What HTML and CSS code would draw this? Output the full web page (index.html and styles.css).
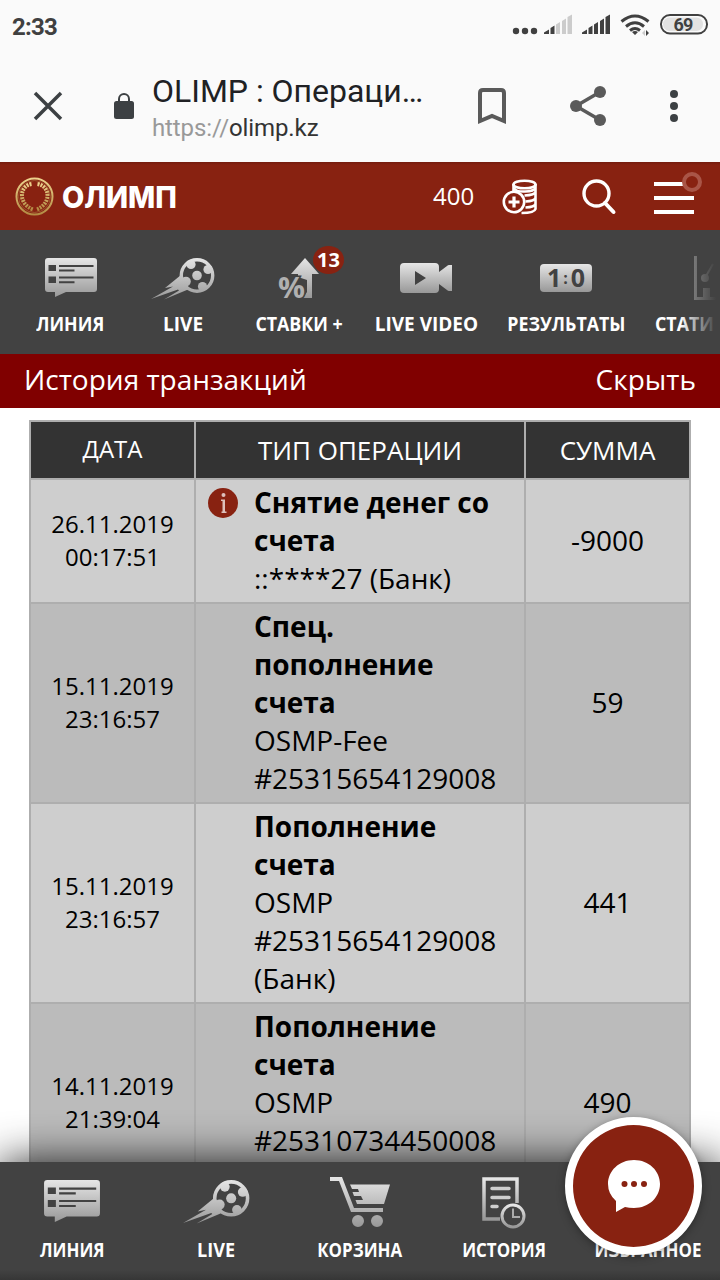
FILE: index.html
```html
<!DOCTYPE html>
<html lang="ru">
  <head>
    <meta charset="utf-8" />
    <meta name="viewport" content="width=device-width, initial-scale=1" />
    <title>OLIMP : Операции</title>
    <link rel="stylesheet" href="styles.css">
  </head>

  <body>
    <!-- shared icon parts -->
    <svg class="defs" width="0" height="0">
      <defs>
        <linearGradient id="silver" x1="0" y1="0" x2="0" y2="1">
          <stop offset="0" stop-color="#e6e6e6" />
          <stop offset="1" stop-color="#989898" />
        </linearGradient>
        <linearGradient id="ball" gradientUnits="userSpaceOnUse" x1="0" y1="0" x2="0" y2="42">
          <stop offset="0" stop-color="#e6e6e6" />
          <stop offset="1" stop-color="#989898" />
        </linearGradient>
        <linearGradient id="gold" x1="0" y1="0" x2="0" y2="1">
          <stop offset="0" stop-color="#ecd28c" />
          <stop offset="1" stop-color="#b38b43" />
        </linearGradient>
        <symbol id="icon-line" viewBox="0 0 52 40">
          <path fill="url(#silver)" d="M3 0h46q3 0 3 3v28q0 3-3 3H21l-11 5v-5H3q-3 0-3-3V3q0-3 3-3z" />
          <path fill="#424242" d="M3.500 7H11v6H3.500zM3.500 18.500H11v6.500H3.500zM14 7h34.500v2H14zM14 11.500h15.500v2H14zM14 18.500h34.500v2H14zM14 23.200h15.500v2H14z" />
        </symbol>
        <symbol id="icon-live" viewBox="0 0 64 42">
          <circle cx="46" cy="17.500" r="15.700" fill="none" stroke="url(#ball)" stroke-width="3.400" />
          <g fill="url(#ball)">
            <circle cx="46" cy="17.500" r="4.800" />
            <circle cx="40" cy="6.500" r="4.600" />
            <circle cx="57" cy="11.500" r="4.600" />
            <circle cx="51.500" cy="28.500" r="4.600" />
            <circle cx="35" cy="23.500" r="4.800" />
            <path d="M30 17L14 30l8-1.500L0 41l27-9.500 1 1L13 41.500l24-10-1-8z" />
          </g>
        </symbol>
      </defs>
    </svg>

    <div class="screen">
      <div class="status-bar">
        <b>2:33</b>
        <svg width="196" height="26" viewBox="0 0 196 26">
          <g fill="#404040">
            <circle cx="4" cy="18" r="3.200" /><circle cx="13" cy="18" r="3.200" /><circle cx="22" cy="18" r="3.200" />
            <path d="M32 21v-1.500l5-3V21zM38.500 21v-6l4-2.500V21zM70 21v-1.500l5-3V21zM76.500 21v-6l4-2.500V21zM82 21v-9.500l4-2.500v12zM88 21V8l4-2.500V21zM93.500 21V4l4.500-2.500V21z" />
          </g>
          <path fill="#cccccc" d="M44 21v-9.500L48 9v12zM50 21V8l4-2.500V21zM55.500 21V4L60 1.500V21z" />
          <g fill="none" stroke="#404040" stroke-width="3">
            <path d="M109.500 8.500q13.500-11 27 0M114 13.500q9-7.500 18 0M118 17.500q5-4 10 0" />
            <rect x="149" y="2" width="46" height="18.500" rx="9" stroke-width="2" />
          </g>
          <path fill="#404040" d="M120 19q3-2 6 0l-3 3zM134 17l3 3-3 3z" />
          <path fill="#cccccc" d="M133 17l-3 3 3 3z" />
          <rect x="151" y="4.500" width="40" height="13.500" rx="6.500" fill="#e2e2e2" />
          <text x="171" y="18" text-anchor="middle" class="battery">69</text>
        </svg>
      </div>

      <div class="browser-bar">
        <svg class="close" width="28" height="28" viewBox="0 0 28 28"><path d="M1 1l26 26M27 1L1 27" stroke="#3c4043" stroke-width="3.500" /></svg>
        <svg class="lock" width="20" height="26" viewBox="0 0 20 26"><rect y="8" width="20" height="18" rx="2.500" fill="#3c4043" /><path d="M5 9V6a5 5 0 0 1 10 0v3" fill="none" stroke="#3c4043" stroke-width="2" /></svg>
        <div class="address">
          <div class="page-title">OLIMP : Операци…</div>
          <div class="url"><span>https://</span>olimp.kz</div>
        </div>
        <svg class="bookmark" width="28" height="36" viewBox="0 0 28 36"><path d="M2 33V5q0-3 3-3h18q3 0 3 3v28l-12-5z" fill="none" stroke="#5a5a5a" stroke-width="4" /></svg>
        <svg class="share" width="36" height="40" viewBox="0 0 36 40"><g fill="#5a5a5a"><circle cx="30" cy="6" r="6" /><circle cx="6" cy="20" r="6" /><circle cx="30" cy="34" r="6" /></g><path d="M30 6L6 20l24 14" fill="none" stroke="#5a5a5a" stroke-width="3.500" /></svg>
        <svg class="dots" width="8" height="32" viewBox="0 0 8 32"><g fill="#3c4043"><circle cx="4" cy="4" r="4" /><circle cx="4" cy="16" r="4" /><circle cx="4" cy="28" r="4" /></g></svg>
      </div>

      <div class="header">
        <svg class="laurel" width="39" height="39" viewBox="0 0 39 39">
          <circle cx="19.500" cy="19.500" r="18" fill="none" stroke="url(#gold)" stroke-width="2" />
          <circle cx="19.500" cy="19.500" r="16" fill="none" stroke="#a46838" stroke-width=".7" />
          <path d="M16.500 7C4 9 3 27 18 32.500M22.500 7c13 2 14 20-1 25.500" fill="none" stroke="url(#gold)" stroke-width="4" stroke-dasharray="2 1" />
        </svg>
        <svg class="wordmark" width="116" height="40"><text x="0" y="32" textLength="115" lengthAdjust="spacingAndGlyphs">ОЛИМП</text></svg>
        <span class="balance">400</span>
        <svg class="coins" width="36" height="36" viewBox="0 0 36 36">
          <g fill="none" stroke="#fff" stroke-width="2.600">
            <ellipse cx="22.500" cy="5.500" rx="11" ry="3.800" />
            <path d="M11.500 5v7M33.500 5v25q-1 4-14 4M33.500 13q-1 3-11 3.500M33.500 19q-1 3-10 3.500M33.500 25q-1 3-10 3.500M12 9q2 4 11 3.500 9 0 10.500-4" />
            <circle cx="12" cy="23" r="10.200" />
            <path d="M12 17.500v11M6.500 23h11" stroke-width="3.200" />
          </g>
        </svg>
        <svg class="search" width="34" height="36" viewBox="0 0 34 36"><circle cx="14.500" cy="14.500" r="12.500" fill="none" stroke="#fff" stroke-width="3.400" /><path d="M23 24l8.500 9" stroke="#fff" stroke-width="4" stroke-linecap="round" /></svg>
        <svg class="burger" width="50" height="44" viewBox="0 0 50 44"><path d="M0 12h30M0 26h40M0 40h40" stroke="#fff" stroke-width="4" /><circle cx="38" cy="10" r="8" fill="#882211" stroke="#a95547" stroke-width="4" /></svg>
      </div>

      <div class="top-nav">
        <div class="nav-item line">
          <svg width="52" height="40"><use href="#icon-line" /></svg>
          <span>ЛИНИЯ</span>
        </div>
        <div class="nav-item live">
          <svg width="64" height="42"><use href="#icon-live" /></svg>
          <span class="latin">LIVE</span>
        </div>
        <div class="nav-item stakes">
          <svg width="42" height="42" viewBox="0 0 42 42">
            <path fill="url(#silver)" d="M27 0l14 16h-7v24h-9l4-6V22l-9-3v-3h-7z" />
            <text x="0" y="39.500" textLength="27" lengthAdjust="spacingAndGlyphs" class="percent">%</text>
          </svg>
          <span>СТАВКИ +</span>
          <em class="badge">13</em>
        </div>
        <div class="nav-item video">
          <svg width="52" height="30" viewBox="0 0 52 30"><path fill="url(#silver)" fill-rule="evenodd" d="M4 0h31q4 0 4 4v5l8-6q1-1 2-1h3v26h-3q-1 0-2-1l-8-6v5q0 4-4 4H4q-4 0-4-4V4q0-4 4-4zM15 8v14l11-7z" /></svg>
          <span class="latin">LIVE VIDEO</span>
        </div>
        <div class="nav-item results">
          <svg width="52" height="28" viewBox="0 0 52 28"><rect width="52" height="28" rx="4" fill="url(#silver)" /><text x="26" y="23" text-anchor="middle" class="score">1<tspan class="colon" dy="-3" dx="2">:</tspan><tspan dy="3" dx="3">0</tspan></text></svg>
          <span>РЕЗУЛЬТАТЫ</span>
        </div>
        <div class="nav-item stats">
          <svg width="52" height="44" viewBox="0 0 52 44"><g fill="#9a9a9a"><path d="M0 0h3v41h49v3H0zM9 32h7v9H9z" /><circle cx="11" cy="22" r="4" /></g><path d="M11 22l8-14" stroke="#9a9a9a" stroke-width="2" /></svg>
          <span>СТАТИ</span>
        </div>
        <div class="fade"></div>
      </div>

      <div class="section-title"><span>История транзакций</span><span>Скрыть</span></div>

      <table class="history">
        <tr><th class="date">ДАТА</th><th class="type">ТИП ОПЕРАЦИИ</th><th class="sum">СУММА</th></tr>
        <tr>
          <td class="date">26.11.2019<br />00:17:51</td>
          <td class="type">
            <div class="operation">
              <svg class="info" width="30" height="30" viewBox="0 0 30 30"><circle cx="15" cy="15" r="15" fill="#882211" /><path d="M13 11.500h4v12h1.500V25h-5v-1.500H14.500V13H13z" fill="#ddc0bb" /><circle cx="15.500" cy="7" r="2" fill="#ddc0bb" /></svg>
              <div><b>Снятие денег со счета</b><br />::****27 (Банк)</div>
            </div>
          </td>
          <td class="sum">-9000</td>
        </tr>
        <tr>
          <td class="date">15.11.2019<br />23:16:57</td>
          <td class="type"><b>Спец. пополнение счета</b><br />OSMP-Fee #25315654129008</td>
          <td class="sum">59</td>
        </tr>
        <tr>
          <td class="date">15.11.2019<br />23:16:57</td>
          <td class="type"><b>Пополнение счета</b><br />OSMP #25315654129008 (Банк)</td>
          <td class="sum">441</td>
        </tr>
        <tr>
          <td class="date">14.11.2019<br />21:39:04</td>
          <td class="type"><b>Пополнение счета</b><br />OSMP #25310734450008<br />&nbsp;</td>
          <td class="sum">490</td>
        </tr>
      </table>

      <div class="bottom-nav">
        <div class="nav-item line">
          <svg width="56" height="43"><use href="#icon-line" /></svg>
          <span>ЛИНИЯ</span>
        </div>
        <div class="nav-item live">
          <svg width="67" height="44"><use href="#icon-live" /></svg>
          <span class="latin">LIVE</span>
        </div>
        <div class="nav-item cart">
          <svg width="60" height="50" viewBox="0 0 60 50"><path fill="url(#silver)" d="M0 0h12l12 31h29v4H21L9 4H0zM20 7.500h40L54 27H27l-1.500-4H33l-2-4h-7l-1.500-4H29l-1-3h-6zM34 44a6 6 0 1 1-12 0 6 6 0 1 1 12 0zM53 44a6 6 0 1 1-12 0 6 6 0 1 1 12 0z" /></svg>
          <span>КОРЗИНА</span>
        </div>
        <div class="nav-item book">
          <svg width="44" height="52" viewBox="0 0 44 52"><g fill="none" stroke="url(#silver)" stroke-width="3.500"><path d="M18 42H2V2h33v24" /><path d="M10 11.500h17M10 20.500h17M10 29.500h5" stroke="#cecece" stroke-linecap="round" stroke-width="3.500" /><circle cx="31" cy="39" r="11" stroke-width="3" /><path d="M31 31.500V40h7" stroke="#aaa" stroke-width="2" /></g></svg>
          <span>ИСТОРИЯ</span>
        </div>
        <div class="nav-item favourite"><span>ИЗБРАННОЕ</span></div>
      </div>

      <div class="chat">
        <svg width="54" height="54" viewBox="0 0 54 54"><path fill="#fff" d="M27 1c15 0 26 11 26 24S42 49 27 49q-5 0-9-1l-9 5V42Q1 35 1 25C1 12 12 1 27 1z" /><g fill="#882211"><circle cx="17.500" cy="25" r="3" /><circle cx="27" cy="25" r="3" /><circle cx="37" cy="25" r="3" /></g></svg>
      </div>
    </div>
  </body>
</html>
```

FILE: styles.css
```css
* {
  box-sizing: border-box;
}

body {
  margin: 0;
  background-color: white;
  color: black;
  font-family: 'Open Sans', 'Noto Sans', sans-serif;
}

svg {
  display: block;
  flex: none;
  overflow: visible;
}

.defs {
  position: absolute;
}

.screen {
  position: relative;
  width: 720px;
  height: 1280px;
  overflow: hidden;
}

/* phone status bar */
.status-bar {
  display: flex;
  justify-content: space-between;
  height: 50px;
  padding: 13px 12px 0 12px;
  background-color: #fafafa;
  color: #404040;
  font: 24px/28px Roboto, sans-serif;
  letter-spacing: -.8px;
}

.battery {
  font: bold 18px Roboto, sans-serif;
  fill: #404040;
}

/* browser toolbar */
.browser-bar {
  display: flex;
  align-items: center;
  height: 112px;
  padding-left: 34px;
  background-color: #fafafa;
  font-family: Roboto, sans-serif;
}

.lock {
  margin-left: 52px;
}

.address {
  width: 344px;
  padding: 6px 0 0 18px;
}

.page-title {
  color: #202124;
  font-size: 32px;
  letter-spacing: -.02px;
  line-height: 38px;
  white-space: nowrap;
}

.url {
  color: #333;
  font-size: 24px;
  letter-spacing: -.1px;
  line-height: 36px;
}

.url span {
  color: #999;
}

.share {
  margin-left: 64px;
}

.dots {
  margin-left: 64px;
}

/* site header */
.header {
  display: flex;
  align-items: center;
  height: 68px;
  padding-left: 15px;
  background: linear-gradient(#741c0e, #882211 3px);
  color: white;
}

.wordmark {
  margin-left: 8px;
  fill: white;
  font: 800 30px Inter, sans-serif;
}

.balance {
  width: 44px;
  margin: -2px 0 0 255px;
  font-size: 24px;
}

.coins {
  margin: 1px 0 0 25px;
}

.search {
  margin: 2px 0 0 44px;
}

.burger {
  margin: -4px 0 0 38px;
}

/* horizontal menu */
.top-nav {
  position: relative;
  display: flex;
  height: 124px;
  background-color: #424242;
  overflow: hidden;
}

.nav-item {
  position: relative;
  display: flex;
  flex: none;
  flex-direction: column;
  align-items: center;
  justify-content: space-between;
  color: white;
  font-size: 20px;
  font-weight: bold;
  line-height: 28px;
  white-space: nowrap;
}

.nav-item span {
  transform: scaleX(.89);
}

.nav-item .latin {
  transform: scaleX(.95);
}

.top-nav .nav-item {
  padding: 28px 0 16px;
}

.top-nav .line {
  width: 141px;
}

.top-nav .live {
  width: 84px;
}

.top-nav .stakes {
  width: 148px;
}

.top-nav .video {
  width: 106px;
  padding-top: 33px;
}

.top-nav .results {
  width: 174px;
  padding-top: 34px;
}

.top-nav .stats {
  align-items: flex-start;
  padding: 26px 0 16px 2px;
}

.stats svg {
  margin-left: 39px;
}

.stats span {
  transform-origin: left;
}

.percent {
  font: bold 29px 'Open Sans', sans-serif;
  fill: #b0b0b0;
  stroke: #424242;
  stroke-width: 3px;
  paint-order: stroke;
}

.score {
  font: bold 25px 'Open Sans', sans-serif;
  fill: #424242;
}

.colon {
  font-size: 16px;
}

.badge {
  position: absolute;
  top: 16px;
  left: 88px;
  width: 31px;
  height: 28px;
  border-radius: 50%;
  background-color: #882211;
  font: bold 20px/28px 'Open Sans', sans-serif;
  text-align: center;
}

.fade {
  position: absolute;
  top: 0;
  right: 0;
  width: 40px;
  height: 124px;
  background: linear-gradient(to right, rgba(66, 66, 66, 0), #424242 90%);
}

.section-title {
  display: flex;
  justify-content: space-between;
  height: 54px;
  padding: 0 24px;
  background-color: #800000;
  color: white;
  font-size: 28px;
  line-height: 51px;
}

/* transactions */
.history {
  width: 662px;
  margin: 12px 0 0 29px;
  border-collapse: collapse;
  table-layout: fixed;
  font-size: 28px;
  line-height: 38px;
}

.history th,
.history td {
  border: 2px solid #aeaeae;
}

.history th {
  height: 58px;
  padding: 0;
  background-color: #333;
  color: white;
  font-size: 26px;
  font-weight: normal;
}

.history td {
  padding: 3px 0 5px;
  background-color: #cecece;
}

.history tr:nth-child(odd) td {
  background-color: #bbb;
}

.history .date {
  width: 165px;
  font-size: 24px;
  line-height: 33px;
  text-align: center;
}

.history th.date {
  padding-bottom: 3px;
}

.history .sum {
  width: 165px;
  text-align: center;
}

.history td.type {
  padding-right: 12px;
  padding-left: 58px;
}

.operation {
  display: flex;
}

.info {
  margin: 5px 16px 0 -46px;
}

/* fixed bottom menu */
.bottom-nav {
  position: absolute;
  bottom: 0;
  left: 0;
  display: flex;
  width: 100%;
  height: 118px;
  background: linear-gradient(#424242 108px, #363636);
  box-shadow: 0 0 44px rgba(0, 0, 0, .85);
}

.bottom-nav .nav-item {
  width: 144px;
  padding: 18px 0 16px;
  font-size: 19px;
}

.bottom-nav .cart,
.bottom-nav .book {
  padding-top: 15px;
}

.bottom-nav .favourite {
  justify-content: flex-end;
}

.chat {
  position: absolute;
  top: 1117px;
  left: 565px;
  display: flex;
  align-items: center;
  justify-content: center;
  width: 137px;
  height: 138px;
  border: 8px solid white;
  border-radius: 50%;
  background-color: #882211;
  box-shadow: 0 2px 8px rgba(0, 0, 0, .35);
}
```
